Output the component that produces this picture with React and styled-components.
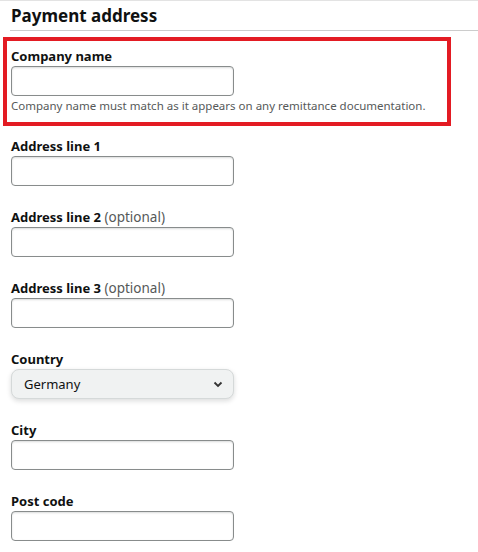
import React from 'react';
import styled, { createGlobalStyle } from 'styled-components';

const GlobalStyle = createGlobalStyle`
  body {
    margin: 0;
    background: #fff;
    font-family: "Noto Sans", "Open Sans", Arial, sans-serif;
    color: #0f1111;
  }
`;

const Page = styled.div`
  width: 478px;
  height: 552px;
  border-top: 1px solid #e3e3e3;
  box-sizing: border-box;
  overflow: hidden;
`;

const Heading = styled.h2`
  margin: 0 0 0 10px;
  padding: 2px 0 0 1px;
  height: 27px;
  box-sizing: content-box;
  border-bottom: 1px solid #cccccc;
  font-size: 17px;
  font-weight: 700;
  line-height: 25px;
`;

const Highlight = styled.div`
  margin: 6px 27px 0 3px;
  border: 4px solid #e31b23;
  padding: 4px 0 8px 4px;
`;

const Fields = styled.div`
  padding: 9px 0 0 11px;
  display: flex;
  flex-direction: column;
  gap: 20px;
`;

const Field = styled.div`
  display: flex;
  flex-direction: column;
`;

const Label = styled.label`
  font-size: 13px;
  font-weight: 700;
  line-height: 19px;
  padding-top: 2px;
`;

const Optional = styled.span`
  font-weight: 400;
  font-size: 13.5px;
  color: #565959;
`;

const Input = styled.input`
  width: 223px;
  height: 30px;
  box-sizing: border-box;
  border: 1px solid #888c8c;
  border-radius: 4px;
  box-shadow: 0 1px 2px rgba(15, 17, 17, 0.15) inset;
  font: inherit;
  font-size: 13px;
  padding: 0 8px;
  outline: none;
`;

const Hint = styled.div`
  margin-top: 2px;
  font-size: 11.5px;
  line-height: 16px;
  color: #565959;
`;

const Select = styled.div`
  width: 223px;
  height: 30px;
  box-sizing: border-box;
  display: flex;
  align-items: center;
  justify-content: space-between;
  padding: 0 10px 0 12px;
  background: #f0f2f2;
  border: 1px solid #d5d9d9;
  border-radius: 8px;
  box-shadow: 0 2px 5px rgba(15, 17, 17, 0.15);
  font-size: 13px;
  color: #0f1111;
`;

const Chevron = () => (
  <svg width="10" height="7" viewBox="0 0 10 7">
    <path d="M1.5 1.5 L5 5 L8.5 1.5" fill="none" stroke="#333" strokeWidth="1.8" />
  </svg>
);

const TextField = ({ label, optional }) => (
  <Field>
    <Label>
      {label}
      {optional && <Optional> (optional)</Optional>}
    </Label>
    <Input type="text" />
  </Field>
);

export default function App() {
  return (
    <Page>
      <GlobalStyle />
      <Heading>Payment address</Heading>
      <Highlight>
        <Field>
          <Label>Company name</Label>
          <Input type="text" />
          <Hint>Company name must match as it appears on any remittance documentation.</Hint>
        </Field>
      </Highlight>
      <Fields>
        <TextField label="Address line 1" />
        <TextField label="Address line 2" optional />
        <TextField label="Address line 3" optional />
        <Field>
          <Label>Country</Label>
          <Select>
            <span>Germany</span>
            <Chevron />
          </Select>
        </Field>
        <TextField label="City" />
        <TextField label="Post code" />
      </Fields>
    </Page>
  );
}
